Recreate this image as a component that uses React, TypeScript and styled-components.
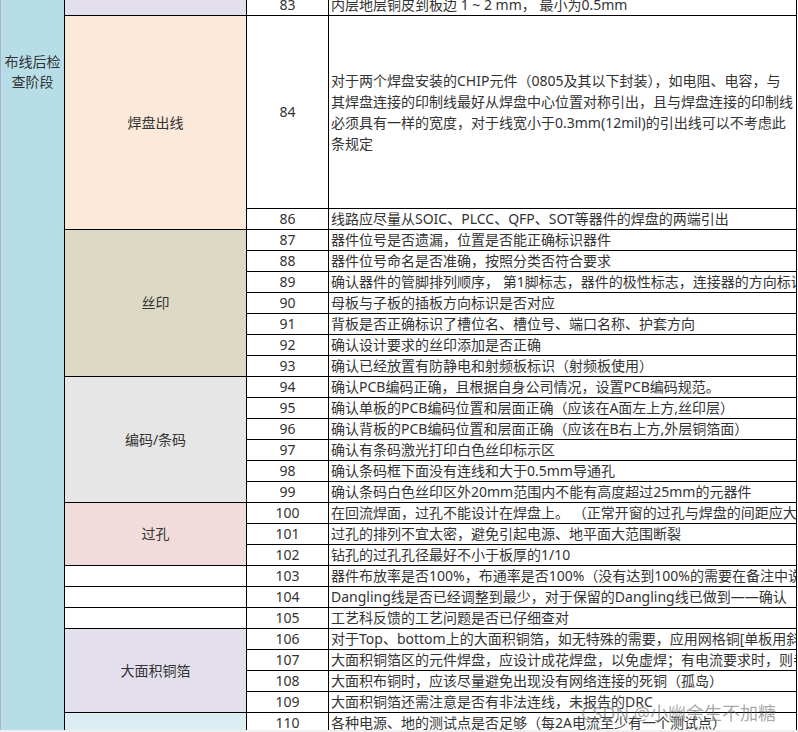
import React from "react";
import styled, { createGlobalStyle } from "styled-components";

const Global = createGlobalStyle`
  html, body { margin: 0; padding: 0; background: #fff; }
  body { overflow: hidden; font-family: "Noto Sans", "Noto Sans CJK SC", sans-serif; }
  * { box-sizing: border-box; }
`;

const Page = styled.div`
  position: relative;
  width: 798px;
  height: 732px;
  display: flex;
  flex-direction: column;
  overflow: hidden;
  background: #fff;
`;

const Viewport = styled.div`
  flex: 1;
  overflow: hidden;
`;

const Sheet = styled.div`
  display: grid;
  grid-template-columns: 64px 181px 81px 467px;
  grid-auto-rows: auto;
  gap: 1px;
  width: 797px;
  margin-top: -5px;
  background: #000;
  border-right: 1px solid #000;
  color: #333;
  font-size: 14px;
`;

const StageCell = styled.div<{ $span: number }>`
  grid-column: 1;
  grid-row: 1 / span ${(p) => p.$span};
  background: #b7dee8;
  border-left: 1px solid #a7b4cc;
  padding: 56px 2px 0;
  text-align: center;
  line-height: 20px;
  font-family: "Noto Sans CJK SC", sans-serif;
`;

const GroupCell = styled.div<{ $start: number; $span: number; $bg: string }>`
  grid-column: 2;
  grid-row: ${(p) => p.$start} / span ${(p) => p.$span};
  background: ${(p) => p.$bg};
  display: flex;
  align-items: center;
  justify-content: center;
  line-height: 20px;
`;

const NumCell = styled.div<{ $row: number }>`
  grid-column: 3;
  grid-row: ${(p) => p.$row};
  background: #fff;
  display: flex;
  align-items: center;
  justify-content: center;
  line-height: 20px;
`;

const TextCell = styled.div<{ $row: number; $tall?: boolean }>`
  grid-column: 4;
  grid-row: ${(p) => p.$row};
  height: ${(p) => (p.$tall ? "192px" : "20px")};
  background: #fff;
  padding-left: 2px;
  display: flex;
  flex-direction: column;
  justify-content: center;
  line-height: ${(p) => (p.$tall ? "21px" : "20px")};
  white-space: nowrap;
  overflow: hidden;
`;

const Line = styled.span`
  display: block;
`;

const BottomStrip = styled.div`
  height: 2px;
  background: #efefef;
`;

const Watermark = styled.div`
  position: absolute;
  left: 581px;
  top: 702px;
  font-size: 18px;
  line-height: 22px;
  font-family: "Noto Sans", "Noto Sans CJK SC", sans-serif;
  color: rgba(110, 110, 110, 0.6);
  white-space: nowrap;
  pointer-events: none;
`;

type Row = { n: number; text: string | string[]; tall?: boolean };
type Group = { label: string; bg: string; rows: Row[] };

const groups: Group[] = [
  {
    label: "",
    bg: "#e4dfec",
    rows: [{ n: 83, text: "内层地层铜皮到板边 1 ~ 2 mm， 最小为0.5mm" }],
  },
  {
    label: "焊盘出线",
    bg: "#fde9d9",
    rows: [
      {
        n: 84,
        tall: true,
        text: [
          "对于两个焊盘安装的CHIP元件（0805及其以下封装），如电阻、电容，与",
          "其焊盘连接的印制线最好从焊盘中心位置对称引出，且与焊盘连接的印制线",
          "必须具有一样的宽度，对于线宽小于0.3mm(12mil)的引出线可以不考虑此",
          "条规定",
        ],
      },
      { n: 86, text: "线路应尽量从SOIC、PLCC、QFP、SOT等器件的焊盘的两端引出" },
    ],
  },
  {
    label: "丝印",
    bg: "#ddd9c4",
    rows: [
      { n: 87, text: "器件位号是否遗漏，位置是否能正确标识器件" },
      { n: 88, text: "器件位号命名是否准确，按照分类否符合要求" },
      { n: 89, text: "确认器件的管脚排列顺序， 第1脚标志，器件的极性标志，连接器的方向标识" },
      { n: 90, text: "母板与子板的插板方向标识是否对应" },
      { n: 91, text: "背板是否正确标识了槽位名、槽位号、端口名称、护套方向" },
      { n: 92, text: "确认设计要求的丝印添加是否正确" },
      { n: 93, text: "确认已经放置有防静电和射频板标识（射频板使用）" },
    ],
  },
  {
    label: "编码/条码",
    bg: "#e6e6e6",
    rows: [
      { n: 94, text: "确认PCB编码正确，且根据自身公司情况，设置PCB编码规范。" },
      { n: 95, text: "确认单板的PCB编码位置和层面正确（应该在A面左上方,丝印层）" },
      { n: 96, text: "确认背板的PCB编码位置和层面正确（应该在B右上方,外层铜箔面）" },
      { n: 97, text: "确认有条码激光打印白色丝印标示区" },
      { n: 98, text: "确认条码框下面没有连线和大于0.5mm导通孔" },
      { n: 99, text: "确认条码白色丝印区外20mm范围内不能有高度超过25mm的元器件" },
    ],
  },
  {
    label: "过孔",
    bg: "#f2dcdb",
    rows: [
      { n: 100, text: "在回流焊面，过孔不能设计在焊盘上。 （正常开窗的过孔与焊盘的间距应大于0.5mm）" },
      { n: 101, text: "过孔的排列不宜太密，避免引起电源、地平面大范围断裂" },
      { n: 102, text: "钻孔的过孔孔径最好不小于板厚的1/10" },
    ],
  },
  {
    label: "",
    bg: "#ffffff",
    rows: [{ n: 103, text: "器件布放率是否100%，布通率是否100%（没有达到100%的需要在备注中说明）" }],
  },
  {
    label: "",
    bg: "#ffffff",
    rows: [{ n: 104, text: "Dangling线是否已经调整到最少，对于保留的Dangling线已做到——确认" }],
  },
  {
    label: "",
    bg: "#ffffff",
    rows: [{ n: 105, text: "工艺科反馈的工艺问题是否已仔细查对" }],
  },
  {
    label: "大面积铜箔",
    bg: "#e4dfec",
    rows: [
      { n: 106, text: "对于Top、bottom上的大面积铜箔，如无特殊的需要，应用网格铜[单板用斜网]" },
      { n: 107, text: "大面积铜箔区的元件焊盘，应设计成花焊盘，以免虚焊；有电流要求时，则考虑加宽" },
      { n: 108, text: "大面积布铜时，应该尽量避免出现没有网络连接的死铜（孤岛）" },
      { n: 109, text: "大面积铜箔还需注意是否有非法连线，未报告的DRC" },
    ],
  },
  {
    label: "",
    bg: "#daeef3",
    rows: [{ n: 110, text: "各种电源、地的测试点是否足够（每2A电流至少有一个测试点）" }],
  },
];

const totalRows = groups.reduce((s, g) => s + g.rows.length, 0);

export default function App() {
  let rowCursor = 1;
  const cells: React.ReactNode[] = [];
  groups.forEach((g, gi) => {
    const start = rowCursor;
    cells.push(
      <GroupCell key={`g${gi}`} $start={start} $span={g.rows.length} $bg={g.bg}>
        {g.label}
      </GroupCell>
    );
    g.rows.forEach((r) => {
      const row = rowCursor++;
      cells.push(
        <NumCell key={`n${r.n}`} $row={row}>
          {r.n}
        </NumCell>
      );
      cells.push(
        <TextCell key={`t${r.n}`} $row={row} $tall={r.tall}>
          {Array.isArray(r.text)
            ? r.text.map((l, i) => <Line key={i}>{l}</Line>)
            : r.text}
        </TextCell>
      );
    });
  });

  return (
    <>
      <Global />
      <Page>
        <Viewport>
          <Sheet>
            <StageCell $span={totalRows}>布线后检查阶段</StageCell>
            {cells}
          </Sheet>
        </Viewport>
        <BottomStrip />
        <Watermark>CSDN @小幽余生不加糖</Watermark>
      </Page>
    </>
  );
}
